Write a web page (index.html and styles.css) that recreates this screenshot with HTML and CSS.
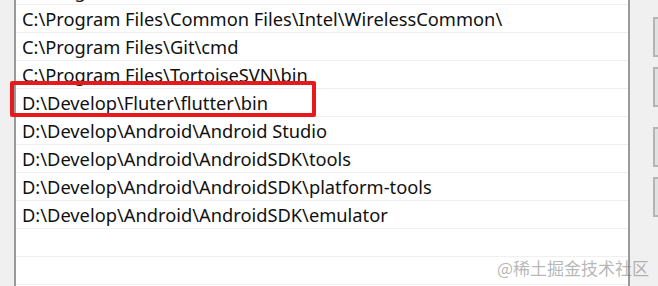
FILE: index.html
```html
<!DOCTYPE html>
<html lang="zh">
<head>
    <meta charset="UTF-8">
    <title>编辑环境变量</title>
    <link rel="stylesheet" href="styles.css">
</head>
<body>
    <div class="window">
        <div class="gutter"></div>
        <div class="path-list">
            <div class="row">C:\Program Files\Common Files\Intel\Shared Libraries\redist\</div>
            <div class="row">C:\Program Files\Common Files\Intel\WirelessCommon\</div>
            <div class="row">C:\Program Files\Git\cmd</div>
            <div class="row">C:\Program Files\TortoiseSVN\bin</div>
            <div class="row marked">D:\Develop\Fluter\flutter\bin</div>
            <div class="row">D:\Develop\Android\Android Studio</div>
            <div class="row">D:\Develop\Android\AndroidSDK\tools</div>
            <div class="row">D:\Develop\Android\AndroidSDK\platform-tools</div>
            <div class="row">D:\Develop\Android\AndroidSDK\emulator</div>
            <div class="row"></div>
            <div class="row"></div>
        </div>
        <div class="buttons">
            <button class="btn"></button>
            <button class="btn gap"></button>
            <button class="btn"></button>
            <button class="btn gap"></button>
        </div>
        <div class="watermark">@稀土掘金技术社区</div>
    </div>
</body>
</html>
```

FILE: styles.css
```css
html, body {
    margin: 0;
    padding: 0;
}
body {
    background-color: #f0f0f0;
    font-family: "Noto Sans", "Noto Sans CJK SC", sans-serif;
    overflow: hidden;
}
.window {
    position: relative;
    display: flex;
    height: 286px;
    overflow: hidden;
}
.gutter {
    width: 14px;
    flex: none;
}
.path-list {
    width: 612px;
    flex: none;
    margin-top: -23px;
    background-color: #fff;
    border-left: 2px solid #9a9a9a;
    border-right: 2px solid #9a9a9a;
}
.row {
    height: 27px;
    line-height: 27px;
    padding-left: 6px;
    border-bottom: 1px solid #efefef;
    font-size: 18.3px;
    color: #111;
    white-space: nowrap;
    position: relative;
}
.row.marked::after {
    content: "";
    position: absolute;
    left: -6px;
    top: -8px;
    width: 298px;
    height: 28px;
    border: 4px solid #e8191c;
    border-radius: 2px;
}
.buttons {
    flex: none;
    display: flex;
    flex-direction: column;
    padding-top: 17px;
    margin-left: 23px;
}
.btn {
    width: 120px;
    height: 40px;
    margin-bottom: 10px;
    background-color: #e1e1e1;
    border: 2px solid #b4b4b4;
}
.btn.gap {
    margin-bottom: 20px;
}
.watermark {
    position: absolute;
    left: 497px;
    top: 255px;
    font-size: 17px;
    color: rgba(120, 120, 120, 0.55);
    font-family: "Noto Sans CJK SC", sans-serif;
}
```
